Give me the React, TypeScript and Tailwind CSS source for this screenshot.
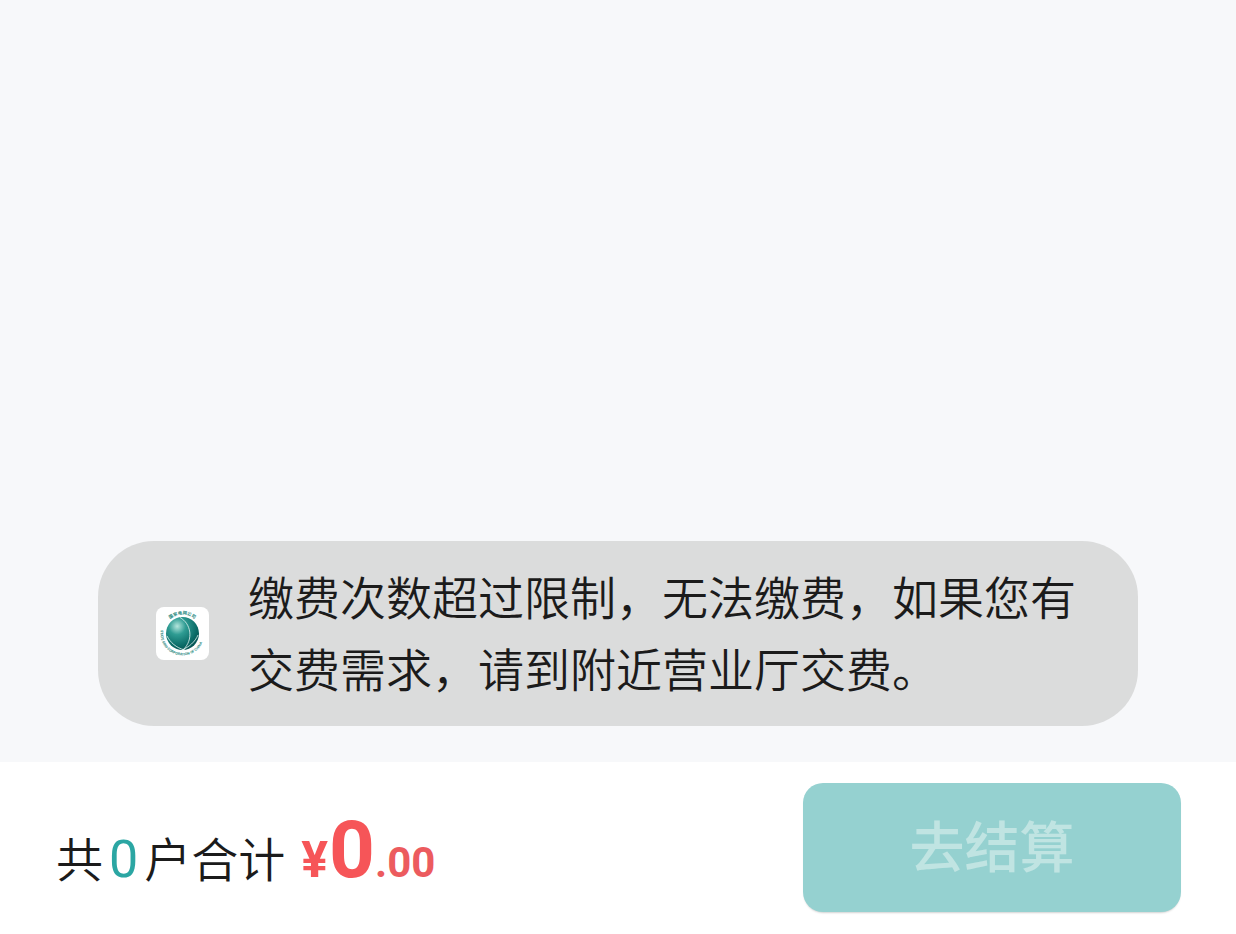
const sans = '"Roboto", "Noto Sans CJK SC", sans-serif';

function GridLogo() {
  return (
    <div className="flex h-[53px] w-[53px] shrink-0 items-center justify-center rounded-[8px] bg-white">
      <svg width="53" height="53" viewBox="0 0 53 53">
        <defs>
          <radialGradient id="globe" cx="34%" cy="28%" r="80%">
            <stop offset="0%" stopColor="#b5e6dd" />
            <stop offset="32%" stopColor="#2f9c93" />
            <stop offset="75%" stopColor="#0a6a66" />
            <stop offset="100%" stopColor="#05504e" />
          </radialGradient>
          <path id="ringTop" d="M13.06 13.06a19 19 0 0 1 26.88 0" />
          <path id="ringBottom" d="M5.8 19a22 22 0 1 0 41.4 0" />
        </defs>
        <circle cx="26.5" cy="26.5" r="16.5" fill="url(#globe)" />
        <path d="M24 10.5c11 6 14 22 3 32.5M29 43c-9-2-15-8-18-14M26 43c7-3 13-8 16-15" fill="none" stroke="#e4f5f2" strokeWidth="0.8" />
        <text fontSize="4.4" fill="#2a8a81" fontFamily={sans} fontWeight="700">
          <textPath href="#ringTop" startOffset="5%">国家电网公司</textPath>
        </text>
        <text fontSize="3.6" fill="#2a8a81" fontFamily={sans} fontWeight="700">
          <textPath href="#ringBottom" startOffset="5%">STATE GRID CORPORATION OF CHINA</textPath>
        </text>
      </svg>
    </div>
  );
}

export default function App() {
  return (
    <div className="flex h-[934px] w-full flex-col bg-white" style={{ fontFamily: sans }}>
      <div className="flex h-[762px] flex-col items-center justify-end bg-[#f7f8fa] pb-[36px]">
        <div className="flex h-[185px] w-[1040px] items-center rounded-[56px] bg-[#dbdcdc] pl-[58px] pr-[60px]">
          <GridLogo />
          <p className="ml-[39px] pt-[2px] text-[46px] font-[350] leading-[72px] text-[#1b1b1b]">
            缴费次数超过限制，无法缴费，如果您有交费需求，请到附近营业厅交费。
          </p>
        </div>
      </div>
      <div className="flex flex-1 items-start justify-between pl-[56px] pr-[55px] pt-[21px]">
        <div className="mt-[27px] flex h-[80px] items-baseline text-[47px] font-[350] text-[#1b1b1b]">
          <span>共</span>
          <span className="ml-[6px] mr-[6px] text-[52px] font-normal text-[#2ba6a3]">0</span>
          <span>户合计</span>
          <span className="ml-[16px] mr-[1px] text-[50px] font-bold text-[#f65558]">¥</span>
          <span className="text-[80px] font-bold leading-none text-[#f65558]">0</span>
          <span className="text-[42px] font-bold text-[#ec5b5e]">.00</span>
        </div>
        <button className="flex h-[129px] w-[378px] items-center justify-center rounded-[20px] bg-[#95d1d0] pt-[1px] text-[55px] font-medium text-[#c0e4e2] shadow-[0_2px_2px_-1px_rgba(0,0,0,0.18)]">
          去结算
        </button>
      </div>
    </div>
  );
}
